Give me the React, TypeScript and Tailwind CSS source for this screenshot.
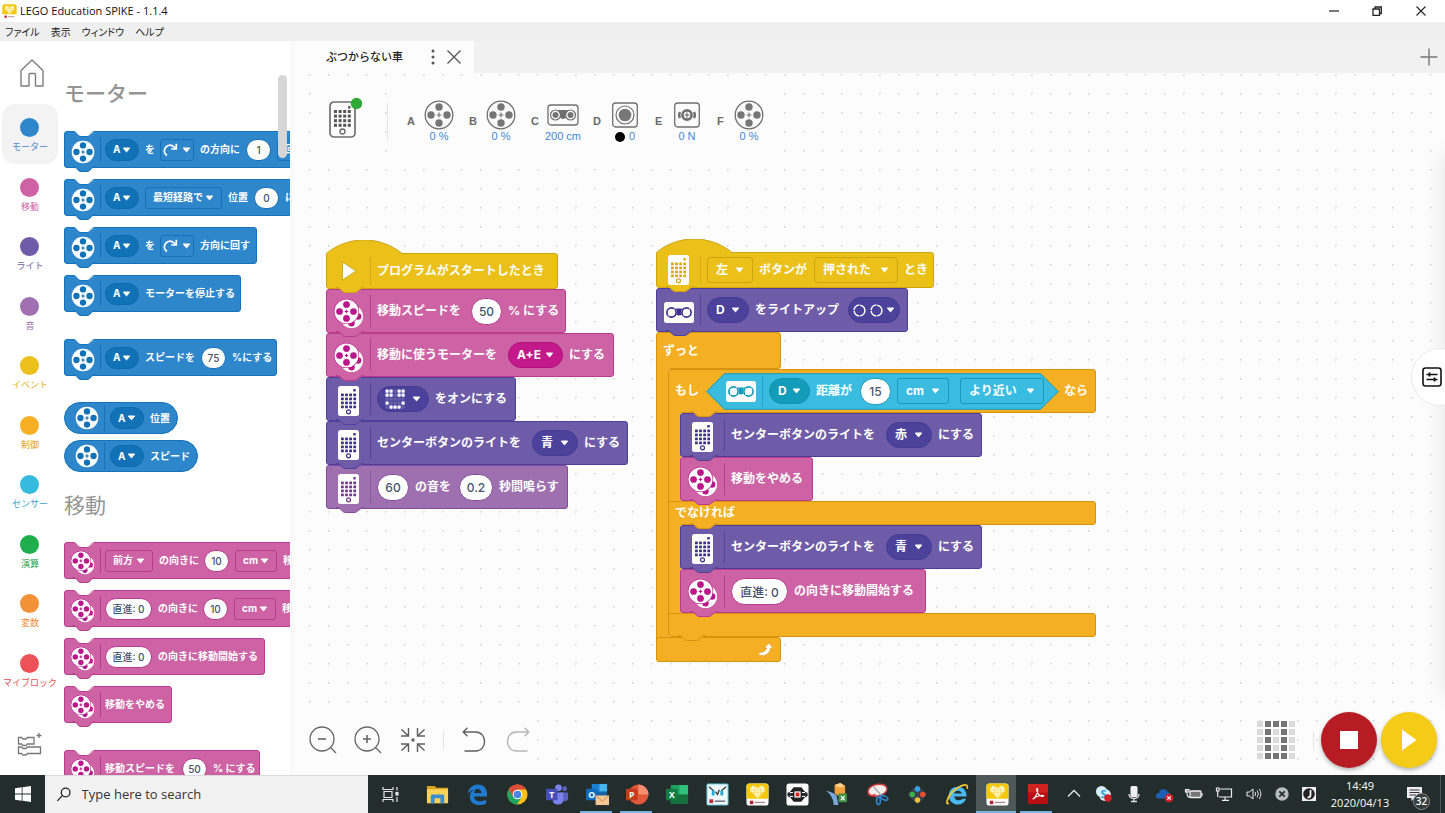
import { createContext, useContext } from "react";
import type { ReactNode } from "react";

type Tone = {
  box: string;
  fill: string;
  line: string;
  stroke: string;
  field: string;
  ink: string;
};

const tones: Record<string, Tone> = {
  motor: { box: "bg-[#2e86cb] border-[#1673bb]", fill: "fill-[#2e86cb]", line: "bg-[#1673bb]", stroke: "stroke-[#1673bb]", field: "bg-[#1272b8] border-[#0d69ae]", ink: "#1272b8" },
  move: { box: "bg-[#cd62a4] border-[#b93a8e]", fill: "fill-[#cd62a4]", line: "bg-[#b93a8e]", stroke: "stroke-[#b93a8e]", field: "bg-[#c3198a] border-[#ad1179]", ink: "#b9178a" },
  light: { box: "bg-[#6f5ca8] border-[#4b3f99]", fill: "fill-[#6f5ca8]", line: "bg-[#564795]", stroke: "stroke-[#4b3f99]", field: "bg-[#4c429b] border-[#433a94]", ink: "#3c2f8c" },
  sound: { box: "bg-[#9e70b0] border-[#844b9c]", fill: "fill-[#9e70b0]", line: "bg-[#8a559f]", stroke: "stroke-[#844b9c]", field: "bg-[#844b9c] border-[#743c8d]", ink: "#75368f" },
  event: { box: "bg-[#ebc119] border-[#cda50f]", fill: "fill-[#ebc119]", line: "bg-[#d3ab10]", stroke: "stroke-[#cda50f]", field: "bg-[#d3ab10] border-[#cda50f]", ink: "#d3ab10" },
  control: { box: "bg-[#f5af22] border-[#d6930f]", fill: "fill-[#f5af22]", line: "bg-[#d6930f]", stroke: "stroke-[#d6930f]", field: "bg-[#d6930f] border-[#d6930f]", ink: "#d6930f" },
  sensor: { box: "bg-[#3abce0] border-[#1899bb]", fill: "fill-[#3abce0]", line: "bg-[#1da3c5]", stroke: "stroke-[#1899bb]", field: "bg-[#129cb9] border-[#0e93af]", ink: "#129cb9" },
};

const BlockContext = createContext<{ tone: Tone; small: boolean }>({ tone: tones.motor, small: false });

/* ---------- icons on blocks ---------- */

function Reel({ cx, cy, r, ink }: { cx: number; cy: number; r: number; ink: string }) {
  const d = r * 0.58;
  const h = r * 0.28;
  return (
    <g>
      <circle cx={cx} cy={cy} r={r} fill="#fff" />
      <circle cx={cx} cy={cy - d} r={h} fill={ink} />
      <circle cx={cx} cy={cy + d} r={h} fill={ink} />
      <circle cx={cx - d} cy={cy} r={h} fill={ink} />
      <circle cx={cx + d} cy={cy} r={h} fill={ink} />
      <path d={`M${cx - 1.8} ${cy}h3.6M${cx} ${cy - 1.8}v3.6`} stroke={ink} strokeWidth="1.2" />
    </g>
  );
}

function MotorIcon() {
  const { tone } = useContext(BlockContext);
  return (
    <svg width="24" height="24" viewBox="0 0 24 24" aria-hidden="true">
      <Reel cx={12} cy={12} r={11.3} ink={tone.ink} />
    </svg>
  );
}

function MoveIcon() {
  const { tone, small } = useContext(BlockContext);
  const size = small ? 25 : 31;
  return (
    <svg width={size} height={size} viewBox="0 0 31 31" aria-hidden="true">
      <Reel cx={18.5} cy={18.5} r={11.5} ink={tone.ink} />
      <circle cx="13.5" cy="13.5" r="12.6" fill={tone.ink} />
      <Reel cx={13.5} cy={13.5} r={12} ink={tone.ink} />
    </svg>
  );
}

function HubIcon() {
  const { tone } = useContext(BlockContext);
  return (
    <svg width="21" height="30" viewBox="0 0 21 30" fill={tone.ink} aria-hidden="true">
      <rect width="21" height="30" rx="2.5" fill="#fff" />
      {[0, 1, 2, 3].map((r) =>
        [0, 1, 2, 3].map((c) => <rect key={`${r}-${c}`} x={3 + c * 4.1} y={7.5 + r * 4} width="2.8" height="2.8" rx=".6" />),
      )}
      <rect x="15.3" y="3" width="2.4" height="2.4" rx=".5" />
      <circle cx="10.5" cy="25.8" r="2" fill="none" stroke={tone.ink} strokeWidth="1.2" />
    </svg>
  );
}

function DistanceIcon() {
  const { tone } = useContext(BlockContext);
  return (
    <svg width="30" height="21" viewBox="0 0 30 21" fill="none" stroke={tone.ink} aria-hidden="true">
      <rect width="30" height="21" rx="2.5" fill="#fff" stroke="none" />
      <path d="M8 6.500H22V10.500C19 10.500 19 13.500 15 13.500S11 10.500 8 10.500Z" fill={tone.ink} stroke="none" />
      <circle cx="7.500" cy="10.500" r="5.600" fill="#fff" stroke="none" />
      <circle cx="22.500" cy="10.500" r="5.600" fill="#fff" stroke="none" />
      <circle cx="7.500" cy="10.500" r="4.600" strokeWidth="1.700" />
      <circle cx="22.500" cy="10.500" r="4.600" strokeWidth="1.700" />
      <path d="M4 14.500L5.500 13M9.500 8L11 6.500M19 14.500L20.500 13M24.500 8L26 6.500" stroke="#fff" strokeWidth="1" />
    </svg>
  );
}

function PlayIcon() {
  return (
    <svg width="16" height="20" viewBox="0 0 16 20" aria-hidden="true">
      <path d="M1.5 1L15 10L1.5 19Z" fill="#fff" stroke="#c39d10" strokeWidth=".8" />
    </svg>
  );
}

function Caret({ className = "" }: { className?: string }) {
  return (
    <svg width="9" height="6" viewBox="0 0 9 6" aria-hidden="true" className={className}>
      <path d="M1.3 1H7.7L4.9 4.6Q4.5 5 4.1 4.6Z" fill="#fff" stroke="#fff" strokeLinejoin="round" />
    </svg>
  );
}

/* ---------- fields ---------- */

function Pick({ value, w, label, square = false }: { value: string; w: string; label: string; square?: boolean }) {
  const { tone, small } = useContext(BlockContext);
  const size = small ? "h-[22px] text-[10px]" : "h-[26px] text-[12px]";
  const pad = small ? "pl-[7px]" : "pl-[8px]";
  return (
    <span className={`relative flex shrink-0 items-center ${w}`}>
      <select
        aria-label={label}
        defaultValue={value}
        className={`w-full appearance-none border font-bold text-white ${size} ${pad} ${square ? `rounded-[3px] ${tone.box}` : `rounded-full ${tone.field}`}`}
      >
        <option>{value}</option>
      </select>
      <Caret className={`pointer-events-none absolute ${small ? "right-[8px]" : "right-[9px]"}`} />
    </span>
  );
}

function Value({ value, w, label }: { value: string; w: string; label: string }) {
  const { tone, small } = useContext(BlockContext);
  return (
    <input
      aria-label={label}
      defaultValue={value}
      className={`shrink-0 rounded-full border text-center font-medium text-[#45536b] ${tone.box} bg-white! ${w} ${small ? "h-[22px] text-[10px]" : "h-[27px] text-[12px]"}`}
    />
  );
}

function Words({ children, w = "" }: { children: ReactNode; w?: string }) {
  return <span className={`shrink-0 ${w}`}>{children}</span>;
}

function TurnField() {
  const { tone } = useContext(BlockContext);
  return (
    <button type="button" aria-label="回転方向" className={`flex h-[22px] w-[34px] shrink-0 items-center justify-center gap-[4px] rounded-[3px] border ${tone.box}`}>
      <svg width="15" height="14" viewBox="0 0 15 14" fill="none" stroke="#fff" strokeWidth="1.700" aria-hidden="true">
        <path d="M4 12.500C.5 10.500 .5 6 3.500 3.500C6.500 1.200 10 2.500 12.300 5M13.300 .8V6H8.200" />
      </svg>
      <Caret />
    </button>
  );
}

const smile = ["22022", "22022", "11111", "21112", "12221"];

function MatrixField() {
  const { tone } = useContext(BlockContext);
  return (
    <button type="button" aria-label="ライトのパターン" className={`flex h-[26px] w-[52px] shrink-0 items-center justify-center gap-[7px] rounded-full border ${tone.field}`}>
      <svg width="20" height="20" viewBox="0 0 20 20" fill="#fff" aria-hidden="true">
        {smile.map((row, y) =>
          row.split("").map((v, x) => <rect key={`${x}-${y}`} x={x * 4 + 0.5} y={y * 4 + 0.5} width="3.2" height="3.2" rx=".6" opacity={v === "2" ? 1 : 0.15} />),
        )}
      </svg>
      <Caret />
    </button>
  );
}

function EyesField() {
  const { tone } = useContext(BlockContext);
  return (
    <button type="button" aria-label="ライトアップ" className={`flex h-[26px] w-[52px] shrink-0 items-center justify-center gap-[3px] rounded-full border ${tone.field}`}>
      <svg width="30" height="13" viewBox="0 0 30 13" fill="none" stroke="#fff" strokeWidth="1.500" strokeDasharray="7.600 .9" aria-hidden="true">
        <circle cx="6.500" cy="6.500" r="5.400" />
        <circle cx="23.500" cy="6.500" r="5.400" />
      </svg>
      <Caret />
    </button>
  );
}

/* ---------- blocks ---------- */

function Tab({ tone, small = false, inset = false }: { tone: Tone; small?: boolean; inset?: boolean }) {
  if (small) {
    return (
      <svg width="22" height="7" viewBox="0 0 22 7" aria-hidden="true" className={`absolute left-[8px] z-10 -bottom-[6px] ${tone.fill}`}>
        <path d="M1 0H21V1L16 5H6Z" />
        <path d="M0 .5C2 .5 3 1.500 4 2.500C5.500 4.500 6 5.500 8 5.500H14C16 5.500 16.500 4.500 18 2.500C19 1.500 20 .5 22 .5" className={tone.stroke} />
      </svg>
    );
  }
  return (
    <svg width="28" height="7" viewBox="0 0 28 7" aria-hidden="true" className={`absolute z-10 -bottom-[6px] ${inset ? "left-[21px]" : "left-[9px]"} ${tone.fill}`}>
      <path d="M1 0H27V1L20 5H8Z" />
      <path d="M0 .5C3 .5 4 1.500 5.500 3C7 5 8 5.500 10 5.500H18C20 5.500 21 5 22.500 3C24 1.500 25 .5 28 .5" className={tone.stroke} />
    </svg>
  );
}

function Notch({ tone }: { tone: Tone }) {
  return (
    <svg width="22" height="7" viewBox="0 0 22 7" aria-hidden="true" className="absolute left-[8px] -top-px fill-white">
      <path d="M1 0H21V1L16 5H6Z" />
      <path d="M0 .5C2 .5 3 1.500 4 2.500C5.500 4.500 6 5.500 8 5.500H14C16 5.500 16.500 4.500 18 2.500C19 1.500 20 .5 22 .5" className={tone.stroke} />
    </svg>
  );
}

function Block({ tone: name, icon, w, children, small = false, hat = false }: { tone: string; icon: ReactNode; w: string; children: ReactNode; small?: boolean; hat?: boolean }) {
  const tone = tones[name];
  const height = small ? "h-[37px] text-[10px]" : hat ? "h-[36px] text-[12px]" : "h-[44px] text-[12px]";
  return (
    <BlockContext.Provider value={{ tone, small }}>
      <div className={`relative flex shrink-0 items-center rounded-[3px] border font-bold whitespace-nowrap text-white ${tone.box} ${height} ${w}`}>
        {hat && (
          <svg width="78" height="16" viewBox="0 0 78 16" aria-hidden="true" className={`absolute -top-[14px] -left-px ${tone.fill}`}>
            <path d="M.5 16V13.500C22 -4.500 54 -4.500 76 13.500L77 16Z" />
            <path d="M.5 16V13.500C22 -4.500 54 -4.500 76 13.500" fill="none" className={tone.stroke} />
          </svg>
        )}
        {small && <Notch tone={tone} />}
        <span className={`flex shrink-0 justify-center ${small ? "w-[35px] pt-[4px]" : hat ? "w-[43px]" : "w-[43px] pt-[4px]"}`}>{icon}</span>
        <span className={`w-px shrink-0 ${small ? "mr-[4px] h-[25px]" : hat ? "mr-[6px] h-[28px]" : "mr-[6px] h-[32px]"} ${tone.line}`} />
        <span className="flex items-center gap-[6px]">{children}</span>
        <Tab tone={tone} small={small} />
      </div>
    </BlockContext.Provider>
  );
}

function Reporter({ children, w }: { children: ReactNode; w: string }) {
  const tone = tones.motor;
  return (
    <BlockContext.Provider value={{ tone, small: true }}>
      <div className={`flex h-[32px] shrink-0 items-center rounded-full border pl-[10px] text-[10px] font-bold whitespace-nowrap text-white ${tone.box} ${w}`}>
        <MotorIcon />
        <span className={`mr-[5px] ml-[5px] h-[26px] w-px ${tone.line}`} />
        <span className="flex items-center gap-[6px]">{children}</span>
      </div>
    </BlockContext.Provider>
  );
}

function Bar({ children, className, inset = false, tab = false }: { children?: ReactNode; className: string; inset?: boolean; tab?: boolean }) {
  const tone = tones.control;
  return (
    <div className={`relative flex items-center rounded-[3px] border text-[12px] font-bold whitespace-nowrap text-white ${tone.box} ${className}`}>
      {children}
      {tab && <Tab tone={tone} inset={inset} />}
    </div>
  );
}

function Mouth({ children }: { children: ReactNode }) {
  return (
    <div className="flex">
      <div className="relative -my-[3px] w-[13px] shrink-0 border-l border-[#d6930f] bg-[#f5af22]" />
      <div className="relative -ml-px flex flex-col items-start">{children}</div>
    </div>
  );
}

function Condition() {
  const tone = tones.sensor;
  return (
    <BlockContext.Provider value={{ tone, small: false }}>
      <div className="relative mx-[5px] flex h-[37px] w-[353px] shrink-0 items-center">
        <svg viewBox="0 0 353 37" preserveAspectRatio="none" className={`absolute inset-0 h-full w-full ${tone.fill} ${tone.stroke}`} aria-hidden="true">
          <path d="M.7 18.500L18.500 .7H334.500L352.300 18.500L334.500 36.300H18.500Z" />
        </svg>
        <div className="relative flex items-center gap-[6px] pl-[20px]">
          <DistanceIcon />
          <span className={`h-[31px] w-px ${tone.line}`} />
          <Pick value="D" w="w-[41px]" label="ポート" />
          <Words w="w-[38px]">距離が</Words>
          <Value value="15" w="w-[31px]" label="距離" />
          <Pick value="cm" w="w-[52px]" label="単位" square />
          <span className="w-[84px] pl-[5px]">
            <Pick value="より近い" w="w-[84px]" label="比較" square />
          </span>
        </div>
      </div>
    </BlockContext.Provider>
  );
}

function LeftStack() {
  return (
    <div className="absolute top-[180px] left-[34px] flex flex-col items-start">
      <Block tone="event" icon={<PlayIcon />} w="w-[232px]" hat>
        <Words>プログラムがスタートしたとき</Words>
      </Block>
      <Block tone="move" icon={<MoveIcon />} w="w-[240px]">
        <Words w="w-[88px]">移動スピードを</Words>
        <Value value="50" w="w-[31px]" label="スピード" />
        <Words>% にする</Words>
      </Block>
      <Block tone="move" icon={<MoveIcon />} w="w-[288px]">
        <Words w="w-[125px]">移動に使うモーターを</Words>
        <Pick value="A+E" w="w-[55px]" label="モーター" />
        <Words>にする</Words>
      </Block>
      <Block tone="light" icon={<HubIcon />} w="w-[190px]">
        <MatrixField />
        <Words>をオンにする</Words>
      </Block>
      <Block tone="light" icon={<HubIcon />} w="w-[302px]">
        <Words w="w-[149px]">センターボタンのライトを</Words>
        <Pick value="青" w="w-[46px]" label="色" />
        <Words>にする</Words>
      </Block>
      <Block tone="sound" icon={<HubIcon />} w="w-[242px]">
        <Value value="60" w="w-[32px]" label="音程" />
        <Words w="w-[38px]">の音を</Words>
        <Value value="0.2" w="w-[34px]" label="秒数" />
        <Words>秒間鳴らす</Words>
      </Block>
    </div>
  );
}

function RightStack() {
  return (
    <div className="absolute top-[179px] left-[364px] flex flex-col items-start">
      <Block tone="event" icon={<HubIcon />} w="w-[278px]" hat>
        <Pick value="左" w="w-[46px]" label="ボタン" square />
        <Words w="w-[49px]">ボタンが</Words>
        <Pick value="押された" w="w-[84px]" label="状態" square />
        <Words>とき</Words>
      </Block>
      <Block tone="light" icon={<DistanceIcon />} w="w-[252px]">
        <Pick value="D" w="w-[42px]" label="ポート" />
        <Words w="w-[87px]">をライトアップ</Words>
        <EyesField />
      </Block>
      <Bar className="h-[37px] w-[125px] pl-[6px]">
        <Words>ずっと</Words>
      </Bar>
      <Mouth>
        <Bar className="h-[44px] w-[428px] pl-[6px]" tab inset>
          <Words w="w-[26px]">もし</Words>
          <Condition />
          <Words>なら</Words>
        </Bar>
        <Mouth>
          <Block tone="light" icon={<HubIcon />} w="w-[302px]">
            <Words w="w-[149px]">センターボタンのライトを</Words>
            <Pick value="赤" w="w-[46px]" label="色" />
            <Words>にする</Words>
          </Block>
          <Block tone="move" icon={<MoveIcon />} w="w-[133px]">
            <Words>移動をやめる</Words>
          </Block>
        </Mouth>
        <Bar className="h-[24px] w-[428px] pl-[6px]" tab inset>
          <span className="relative z-20">でなければ</span>
        </Bar>
        <Mouth>
          <Block tone="light" icon={<HubIcon />} w="w-[302px]">
            <Words w="w-[149px]">センターボタンのライトを</Words>
            <Pick value="青" w="w-[46px]" label="色" />
            <Words>にする</Words>
          </Block>
          <Block tone="move" icon={<MoveIcon />} w="w-[246px]">
            <Value value="直進: 0" w="w-[57px]" label="向き" />
            <Words>の向きに移動開始する</Words>
          </Block>
        </Mouth>
        <Bar className="h-[24px] w-[428px]" tab />
      </Mouth>
      <Bar className="h-[25px] w-[125px] justify-end pr-[7px]">
        <svg width="14" height="13" viewBox="0 0 14 13" aria-hidden="true">
          <path d="M0 9.500C4 9.700 7 8 7.800 4.800H5.300L10.300 .3L13.800 5.200H11.200C11 10.500 6 13.800 0 12Z" fill="#fff" stroke="#c98a12" strokeWidth=".4" />
        </svg>
      </Bar>
    </div>
  );
}

/* ---------- side navigation and palette ---------- */

const categories = [
  { name: "モーター", dot: "bg-[#2e86cb]", text: "text-[#4c86cc]" },
  { name: "移動", dot: "bg-[#cf61a5]", text: "text-[#cf61a5]" },
  { name: "ライト", dot: "bg-[#6f5ba7]", text: "text-[#6f5ba7]" },
  { name: "音", dot: "bg-[#a070b1]", text: "text-[#a070b1]" },
  { name: "イベント", dot: "bg-[#ecc01a]", text: "text-[#e3b11c]" },
  { name: "制御", dot: "bg-[#f6ae22]", text: "text-[#e39a1c]" },
  { name: "センサー", dot: "bg-[#36bbdf]", text: "text-[#2ea6c9]" },
  { name: "演算", dot: "bg-[#1eae4c]", text: "text-[#1e9e47]" },
  { name: "変数", dot: "bg-[#f39138]", text: "text-[#ee8a30]" },
  { name: "マイブロック", dot: "bg-[#ec5258]", text: "text-[#e54e55]" },
];

function Sidebar() {
  return (
    <nav className="flex w-[60px] shrink-0 flex-col">
      <div className="flex h-[63px] shrink-0 items-center justify-center pl-[3px]">
        <button type="button" aria-label="ホーム">
          <svg width="24" height="28" viewBox="0 0 24 28" fill="none" stroke="#7d7d7d" strokeWidth="1.400" strokeLinejoin="round" aria-hidden="true">
            <path d="M1 11.500L12 1L23 11.500V27H15.500V15.500Q15.500 14.500 14.500 14.500H10Q9 14.500 9 15.500V27H1Z" />
          </svg>
        </button>
      </div>
      <ul className="flex flex-1 flex-col px-[2px]">
        {categories.map((c, i) => (
          <li key={c.name} className="flex flex-1">
            <button type="button" className={`flex w-full flex-col items-center rounded-[13px] pt-[14px] ${i === 0 ? "bg-[#f3f3f3]" : ""}`}>
              <span className={`-ml-[2px] size-[19px] rounded-full ${c.dot}`} />
              <span className={`mt-[3px] text-[9px] leading-[14px] whitespace-nowrap ${c.text}`}>{c.name}</span>
            </button>
          </li>
        ))}
      </ul>
      <div className="flex h-[76px] shrink-0 items-center justify-center pt-[14px]">
        <button type="button" aria-label="拡張機能">
          <svg width="26" height="24" viewBox="0 0 26 24" fill="none" stroke="#777" strokeWidth="1.300" aria-hidden="true">
            <path d="M1.500 5.500H4.500L6 7H9L10.500 5.500H17V12H10.500L9 13.500H6L4.500 12H1.500Z" />
            <path d="M1.500 15H4.500L6 16.500H9L10.500 15H23.500V21.500H10.500L9 23H6L4.500 21.500H1.500Z" />
            <path d="M19.500 3.500H24.500M22 1V6" />
          </svg>
        </button>
      </div>
    </nav>
  );
}

function PortA() {
  return <Pick value="A" w="w-[34px]" label="ポート" />;
}

function Palette() {
  return (
    <aside className="relative h-full w-[230px] shrink-0 overflow-hidden pl-[4px]">
      <div className="flex h-full flex-col items-start overflow-hidden pt-[42px]">
        <h2 className="mb-[26px] h-[22px] shrink-0 text-[21px] leading-[22px] font-medium text-[#949494]">モーター</h2>
        <div className="flex flex-col items-start gap-[11px]">
          <Block tone="motor" icon={<MotorIcon />} w="w-[270px]" small>
            <PortA />
            <Words w="w-[9px]">を</Words>
            <TurnField />
            <Words w="w-[40px]">の方向に</Words>
            <Value value="1" w="w-[25px]" label="量" />
            <Pick value="回転" w="w-[48px]" label="単位" square />
          </Block>
          <Block tone="motor" icon={<MotorIcon />} w="w-[270px]" small>
            <PortA />
            <Pick value="最短経路で" w="w-[77px]" label="経路" square />
            <Words w="w-[20px]">位置</Words>
            <Value value="0" w="w-[25px]" label="位置" />
            <Words>にする</Words>
          </Block>
          <Block tone="motor" icon={<MotorIcon />} w="w-[193px]" small>
            <PortA />
            <Words w="w-[9px]">を</Words>
            <TurnField />
            <Words>方向に回す</Words>
          </Block>
          <Block tone="motor" icon={<MotorIcon />} w="w-[177px]" small>
            <PortA />
            <Words>モーターを停止する</Words>
          </Block>
        </div>
        <div className="mt-[27px]">
          <Block tone="motor" icon={<MotorIcon />} w="w-[213px]" small>
            <PortA />
            <Words>スピードを</Words>
            <Value value="75" w="w-[25px]" label="スピード" />
            <Words>%にする</Words>
          </Block>
        </div>
        <div className="mt-[26px] flex flex-col gap-[6px]">
          <Reporter w="w-[114px]">
            <PortA />
            <Words>位置</Words>
          </Reporter>
          <Reporter w="w-[134px]">
            <PortA />
            <Words>スピード</Words>
          </Reporter>
        </div>
        <h2 className="mt-[23px] mb-[25px] h-[22px] shrink-0 text-[21px] leading-[22px] text-[#949494]">移動</h2>
        <div className="flex flex-col items-start gap-[11px]">
          <Block tone="move" icon={<MoveIcon />} w="w-[270px]" small>
            <Pick value="前方" w="w-[48px]" label="向き" square />
            <Words w="w-[39px]">の向きに</Words>
            <Value value="10" w="w-[25px]" label="量" />
            <Pick value="cm" w="w-[42px]" label="単位" square />
            <Words>移動する</Words>
          </Block>
          <Block tone="move" icon={<MoveIcon />} w="w-[270px]" small>
            <Value value="直進: 0" w="w-[47px]" label="向き" />
            <Words w="w-[39px]">の向きに</Words>
            <Value value="10" w="w-[25px]" label="量" />
            <Pick value="cm" w="w-[42px]" label="単位" square />
            <Words>移動する</Words>
          </Block>
          <Block tone="move" icon={<MoveIcon />} w="w-[201px]" small>
            <Value value="直進: 0" w="w-[47px]" label="向き" />
            <Words>の向きに移動開始する</Words>
          </Block>
          <Block tone="move" icon={<MoveIcon />} w="w-[108px]" small>
            <Words>移動をやめる</Words>
          </Block>
        </div>
        <div className="mt-[27px]">
          <Block tone="move" icon={<MoveIcon />} w="w-[196px]" small>
            <Words w="w-[71px]">移動スピードを</Words>
            <Value value="50" w="w-[25px]" label="スピード" />
            <Words>% にする</Words>
          </Block>
        </div>
      </div>
      <span className="absolute top-[34px] right-[3px] h-[83px] w-[9px] rounded-full bg-[#d6d6d6]" />
    </aside>
  );
}

/* ---------- hub and ports ---------- */

function PortMotor() {
  return (
    <svg width="30" height="30" viewBox="0 0 30 30" fill="#757575" aria-hidden="true">
      <circle cx="15" cy="15" r="13.800" fill="none" stroke="#6f6f6f" strokeWidth="1.300" />
      <circle cx="15" cy="7" r="3.700" />
      <circle cx="15" cy="23" r="3.700" />
      <circle cx="7" cy="15" r="3.700" />
      <circle cx="23" cy="15" r="3.700" />
      <path d="M12.500 15H17.500M15 12.500V17.500" stroke="#757575" strokeWidth="1.200" />
    </svg>
  );
}

function PortDistance() {
  return (
    <svg width="32" height="30" viewBox="0 0 32 30" fill="none" stroke="#6f6f6f" aria-hidden="true">
      <rect x="1" y="5" width="30" height="20" rx="3" strokeWidth="1.300" />
      <path d="M9 10H23V17H19.500Q18 19 16 19T12.500 17H9Z" fill="#6f6f6f" stroke="none" />
      <circle cx="8.500" cy="15" r="5" fill="#fcfcfc" strokeWidth="1.200" />
      <circle cx="23.500" cy="15" r="5" fill="#fcfcfc" strokeWidth="1.200" />
      <circle cx="8.500" cy="15" r="3" fill="#757575" stroke="none" />
      <circle cx="23.500" cy="15" r="3" fill="#757575" stroke="none" />
    </svg>
  );
}

function PortColor() {
  return (
    <svg width="28" height="30" viewBox="0 0 28 30" fill="none" stroke="#6f6f6f" aria-hidden="true">
      <rect x="1.700" y="3" width="24.600" height="24" rx="3" strokeWidth="1.300" />
      <circle cx="14" cy="15" r="9" strokeWidth="1.200" />
      <circle cx="14" cy="15" r="6.300" fill="#777" stroke="none" />
    </svg>
  );
}

function PortForce() {
  return (
    <svg width="28" height="30" viewBox="0 0 28 30" fill="none" stroke="#6f6f6f" aria-hidden="true">
      <rect x="1.700" y="3" width="24.600" height="24" rx="3" strokeWidth="1.300" />
      <circle cx="14" cy="15" r="4.600" strokeWidth="2.600" />
      <path d="M14 12.500V17.500M11.500 15H16.500" strokeWidth="1.200" />
      <path d="M7 12Q5.300 15 7 18M21 12Q22.700 15 21 18" strokeWidth="2.400" />
    </svg>
  );
}

const ports = [
  { id: "A", icon: <PortMotor />, value: "0 %" },
  { id: "B", icon: <PortMotor />, value: "0 %" },
  { id: "C", icon: <PortDistance />, value: "200 cm" },
  { id: "D", icon: <PortColor />, value: "0", dot: true },
  { id: "E", icon: <PortForce />, value: "0 N" },
  { id: "F", icon: <PortMotor />, value: "0 %" },
];

function PortRow() {
  return (
    <div className="flex items-start pt-[9px] pl-[30px]">
      <div className="flex h-[78px] w-[46px] items-start justify-center bg-[#fcfcfc] pt-[13px]">
        <svg width="36" height="44" viewBox="0 0 36 44" fill="none" aria-hidden="true">
          <rect x="3" y="7" width="25" height="35" rx="4" stroke="#6f6f6f" strokeWidth="1.700" />
          {[0, 1, 2, 3].map((r) =>
            [0, 1, 2, 3].map((c) => <rect key={`${r}-${c}`} x={7 + c * 4.6} y={15 + r * 4.6} width="3" height="3" fill="#555" />),
          )}
          <rect x="21" y="11" width="2.600" height="2.600" fill="#666" />
          <circle cx="15.500" cy="36.500" r="2.500" stroke="#666" strokeWidth="1.300" />
          <circle cx="29.500" cy="8.500" r="5.700" fill="#2ea836" />
        </svg>
      </div>
      <span className="mt-[21px] ml-[19px] h-[37px] w-px bg-[#e4e4e4]" />
      <div className="flex h-[78px] items-start bg-[#fcfcfc] pl-[17px] font-['Liberation_Sans',sans-serif]">
        {ports.map((p) => (
          <div key={p.id} className="flex w-[62px] items-start pt-[18px]">
            <span className="w-[12px] pt-[14px] pl-[2px] text-[11px] leading-[14px] font-bold text-[#6b6b6b]">{p.id}</span>
            <span className="flex w-[44px] flex-col items-center">
              {p.icon}
              <span className="flex items-center gap-[4px] text-[11px] leading-[13px] whitespace-nowrap text-[#4488d8]">
                {p.dot && <span className="size-[10px] rounded-full bg-black" />}
                {p.value}
              </span>
            </span>
          </div>
        ))}
      </div>
    </div>
  );
}

/* ---------- canvas toolbar ---------- */

function ZoomIcon({ plus = false }: { plus?: boolean }) {
  return (
    <svg width="28" height="28" viewBox="0 0 28 28" fill="none" stroke="#666" strokeWidth="1.300" aria-hidden="true">
      <circle cx="13" cy="13" r="12" />
      <path d="M21.500 21.500L27 27" />
      <path d={plus ? "M9 13H17M13 9V17" : "M9 13H17"} strokeWidth="1.600" />
    </svg>
  );
}

function FitIcon() {
  return (
    <svg width="26" height="26" viewBox="0 0 26 26" fill="none" stroke="#5f5f5f" strokeWidth="1.400" aria-hidden="true">
      <path d="M1.500 2.500L8 8.500M8.500 1V9H1M24.500 2.500L18 8.500M17.500 1V9H25M1.500 23.500L8 17.500M8.500 25V17H1M24.500 23.500L18 17.500M17.500 25V17H25" />
      <circle cx="13" cy="13" r="1.700" fill="#5f5f5f" stroke="none" />
    </svg>
  );
}

function UndoIcon({ flip = false }: { flip?: boolean }) {
  return (
    <svg width="24" height="26" viewBox="0 0 24 26" fill="none" stroke={flip ? "#b5b5b5" : "#606060"} strokeWidth="1.400" aria-hidden="true" className={flip ? "-scale-x-100" : ""}>
      <path d="M1.500 5H13.500C19.500 5 22.500 9.500 22.500 14.500S19.500 24 13.500 24H2.500M5.500 .7L1.200 5L5.500 9.300" />
    </svg>
  );
}

const zero = ["01110", "01010", "01010", "01010", "01110"];

function BottomBar() {
  return (
    <div className="flex items-center justify-between pr-[8px] pb-[7px] pl-[17px]">
      <div className="flex h-[50px] items-center bg-[#fcfcfc]">
        <button type="button" aria-label="縮小"><ZoomIcon /></button>
        <button type="button" aria-label="拡大" className="ml-[17px]"><ZoomIcon plus /></button>
        <button type="button" aria-label="全体表示" className="ml-[18px]"><FitIcon /></button>
        <span className="mr-[18px] ml-[17px] h-[19px] w-px bg-[#e0e0e0]" />
        <button type="button" aria-label="元に戻す"><UndoIcon /></button>
        <button type="button" aria-label="やり直し" className="ml-[20px]"><UndoIcon flip /></button>
      </div>
      <div className="flex items-center">
        <svg width="38" height="38" viewBox="0 0 38 38" aria-hidden="true" className="bg-[#fcfcfc]">
          {zero.map((row, y) =>
            row.split("").map((v, x) => <rect key={`${x}-${y}`} x={x * 8} y={y * 8} width="6" height="6" fill={v === "1" ? "#757575" : "#dadada"} />),
          )}
        </svg>
        <span className="mr-[7px] ml-[18px] h-[19px] w-px bg-[#e6e6e6]" />
        <button type="button" aria-label="停止" className="flex size-[56px] items-center justify-center rounded-full bg-[#b71c24] shadow-[0_2px_4px_rgba(0,0,0,0.3)]">
          <span className="size-[18px] bg-white" />
        </button>
        <button type="button" aria-label="開始" className="ml-[4px] flex size-[56px] items-center justify-center rounded-full bg-[#f4cc17] shadow-[0_2px_4px_rgba(0,0,0,0.3)]">
          <svg width="16" height="22" viewBox="0 0 16 22" aria-hidden="true"><path d="M1 .5L15.500 11L1 21.500Z" fill="#fff" /></svg>
        </button>
      </div>
    </div>
  );
}

function Workspace() {
  return (
    <main className="ml-px flex min-w-0 flex-1 flex-col border-l border-[#f3f3f3]">
      <div className="flex h-[32px] shrink-0 items-stretch justify-between bg-[#f1f1f1]">
        <div className="flex w-[182px] items-center bg-[#fcfcfc] pl-[34px]">
          <span className="w-[101px] text-[11px] font-medium whitespace-nowrap text-[#222]">ぶつからない車</span>
          <button type="button" aria-label="メニュー" className="flex w-[11px] justify-center">
            <svg width="4" height="16" viewBox="0 0 4 16" fill="#555" aria-hidden="true"><circle cx="2" cy="2" r="1.500" /><circle cx="2" cy="8" r="1.500" /><circle cx="2" cy="14" r="1.500" /></svg>
          </button>
          <button type="button" aria-label="閉じる" className="ml-[8px]">
            <svg width="16" height="16" viewBox="0 0 16 16" stroke="#555" strokeWidth="1.300" aria-hidden="true"><path d="M1.500 1.500L14.500 14.500M14.500 1.500L1.500 14.500" /></svg>
          </button>
        </div>
        <button type="button" aria-label="新しいプロジェクト" className="mr-[7px]">
          <svg width="18" height="18" viewBox="0 0 18 18" stroke="#777" strokeWidth="1.400" aria-hidden="true"><path d="M.5 9H17.500M9 .5V17.500" /></svg>
        </button>
      </div>
      <div className="relative flex flex-1 flex-col justify-between overflow-hidden bg-[#fcfcfc] bg-[radial-gradient(circle_at_center,#dcdcdc_1px,transparent_1px)] bg-[size:19px_19px] bg-[position:8px_-8px]">
        <PortRow />
        <BottomBar />
        <LeftStack />
        <RightStack />
        <span className="pointer-events-none absolute top-[80px] -right-[40px] bottom-[80px] w-[40px] shadow-[0_0_22px_rgba(0,0,0,0.1)]" />
        <button type="button" aria-label="モニター" className="absolute top-[275px] -right-[24px] flex size-[58px] items-center rounded-full border border-[#e9e9e9] bg-white pl-[10px]">
          <svg width="20" height="20" viewBox="0 0 20 20" fill="none" stroke="#111" strokeWidth="1.600" aria-hidden="true">
            <rect x="1" y="1" width="18" height="18" rx="2.500" />
            <path d="M4.500 7.500H15.500M4.500 12.500H15.500" />
            <path d="M7.500 5.500V9.500M12.500 10.500V14.500" strokeWidth="1.800" />
          </svg>
        </button>
      </div>
    </main>
  );
}

/* ---------- window frame ---------- */

function SpikeIcon({ size }: { size: number }) {
  return (
    <svg width={size} height={size} viewBox="0 0 24 24" aria-hidden="true">
      <rect x=".5" y=".5" width="23" height="23" rx="3" fill="#fff" />
      <path d="M3.500 .5H20.500A3 3 0 0 1 23.500 3.500V16.500H.5V3.500A3 3 0 0 1 3.500 .5Z" fill="#f4c80c" />
      <g fill="#fff8d0">
        <path d="M6 3H10V5H14V3H18V5H19.500V9H17.500V11H15.500V13H13.500V15H10.500V13H8.500V11H6.500V9H4.500V5H6Z" />
      </g>
      <path d="M4.500 7.500H19.500M4.500 10H19.500M9 3V15M12 3V15M15 3V15" stroke="#f4d34a" strokeWidth=".6" />
      <rect x="4" y="18.500" width="3.600" height="3.600" fill="#b3202c" />
      <path d="M9 20.300H20" stroke="#a88" strokeWidth="1.400" />
    </svg>
  );
}

function TitleBar() {
  return (
    <header className="shrink-0 font-['Open_Sans','Noto_Sans_CJK_JP',sans-serif]">
      <div className="flex h-[22px] items-center bg-white pl-[2px]">
        <SpikeIcon size={15} />
        <h1 className="ml-[3px] flex-1 text-[11px] text-[#111]">LEGO Education SPIKE - 1.1.4</h1>
        <div className="flex items-center gap-[33px] pr-[18px] text-[#222]">
          <button type="button" aria-label="最小化"><svg width="10" height="10" viewBox="0 0 10 10" stroke="#222" strokeWidth="1.200" aria-hidden="true"><path d="M0 5H10" /></svg></button>
          <button type="button" aria-label="元のサイズに戻す"><svg width="10" height="10" viewBox="0 0 10 10" fill="none" stroke="#222" strokeWidth="1.300" aria-hidden="true"><path d="M1 3H7.500V9.300H1ZM3 3V1H9.300V7.500H7.500" /></svg></button>
          <button type="button" aria-label="ウィンドウを閉じる"><svg width="12" height="12" viewBox="0 0 12 12" stroke="#222" strokeWidth="1.100" aria-hidden="true"><path d="M1.500 1.500L10.500 10.500M10.500 1.500L1.500 10.500" /></svg></button>
        </div>
      </div>
      <nav className="flex h-[19px] items-center gap-[11px] bg-[#efefef] pl-[5px] text-[10px] leading-[18px] text-[#222] [font-feature-settings:'palt']">
        <button type="button">ファイル</button>
        <button type="button">表示</button>
        <button type="button">ウィンドウ</button>
        <button type="button">ヘルプ</button>
      </nav>
    </header>
  );
}

/* ---------- taskbar ---------- */

function Letter({ bg, children }: { bg: string; children: string }) {
  return (
    <g>
      <rect x="0" y="6" width="12" height="12" rx="1" fill={bg} />
      <text x="6" y="15.300" textAnchor="middle" fontSize="9" fontWeight="700" fill="#fff" fontFamily="Open Sans, sans-serif">{children}</text>
    </g>
  );
}

const apps: { name: string; art: ReactNode; state?: string }[] = [
  { name: "エクスプローラー", art: <><path d="M1 3H9L11 5H23V21H1Z" fill="#d9a321" /><path d="M1 6.500H23V21H1Z" fill="#fbd35a" /><path d="M5 21V13.500Q5 12 6.500 12H17.500Q19 12 19 13.500V21H15V16H9V21Z" fill="#3b8fd1" /></> },
  { name: "Edge", art: <path d="M2 11C3 4.500 7.500 1.500 12.500 1.500C19 1.500 22 6.500 22 11.500V14H8.500C8.800 17.500 11.500 19 15 19C17.500 19 19.500 18.300 21 17.300V21.300C19 22.500 16.500 23 14 23C8 23 4 19.500 4 14.500C4 11 5.500 8.500 8.500 7C6 7.500 3.500 9 2 11ZM8.500 10.500H16C16 8 14.500 6.300 12.300 6.300S8.800 8 8.500 10.500Z" fill="#2079cc" /> },
  { name: "Chrome", art: <><circle cx="12" cy="12" r="10.500" fill="#fbc116" /><path d="M12 12L2.900 6.750A10.500 10.500 0 0 0 11.500 22.500L16.500 14.500Z" fill="#1fa463" /><path d="M12 6.750H21.100A10.500 10.500 0 0 0 2.900 6.750L7.500 14Z" fill="#dd4b3e" /><circle cx="12" cy="12" r="5" fill="#fff" /><circle cx="12" cy="12" r="4" fill="#4a86e8" /></> },
  { name: "Teams", art: <><circle cx="19.500" cy="6" r="2.500" fill="#5a62c3" /><circle cx="13" cy="5" r="3.500" fill="#7b83eb" /><path d="M15 10H23V16Q23 19 19.500 19H15Z" fill="#5a62c3" /><path d="M7 10H18V17Q18 22.500 12.500 22.500T7 17Z" fill="#7b83eb" /><Letter bg="#464eb8">T</Letter></> },
  { name: "Outlook", state: "open", art: <><rect x="6" y="1" width="16" height="16" fill="#1d7fd0" /><rect x="14" y="1" width="8" height="8" fill="#45b5ec" /><rect x="6" y="9" width="16" height="8" fill="#1763a8" /><Letter bg="#0f6cbd">O</Letter><rect x="10" y="13" width="14" height="10" fill="#f6c690" /><path d="M10 13L17 19L24 13" fill="none" stroke="#c98c4f" /></> },
  { name: "PowerPoint", state: "open", art: <><circle cx="13" cy="12" r="10.500" fill="#e2583a" /><path d="M13 1.500A10.500 10.500 0 0 1 23.500 12H13Z" fill="#f58f70" /><Letter bg="#c33b1c">P</Letter></> },
  { name: "Excel", art: <><rect x="5" y="2" width="18" height="20" rx="1" fill="#21a064" /><path d="M14 2H22A1 1 0 0 1 23 3V12H14Z" fill="#33c07d" /><path d="M5 12H23V21A1 1 0 0 1 22 22H6A1 1 0 0 1 5 21Z" fill="#14703f" /><Letter bg="#107c41">X</Letter></> },
  { name: "WeDo", art: <><rect x="1" y="1" width="22" height="22" rx="1" fill="#eefafd" stroke="#5cc3de" /><path d="M3 4L8 8M21 4L16 8M10 9L12 12L14 7" stroke="#333" strokeWidth="1.300" fill="none" /><rect x="6" y="8" width="3" height="5" fill="#24a9d0" /><rect x="15" y="8" width="3" height="5" fill="#24a9d0" /><rect x="3.500" y="17" width="4" height="4" fill="#c02a35" /><path d="M9 19H20" stroke="#667" strokeWidth="1.500" /></> },
  { name: "SPIKE", art: <SpikeIcon size={24} /> },
  { name: "EV3", art: <><rect x=".5" y=".5" width="23" height="23" rx="3" fill="#fff" /><path d="M8 4.500H16L20 9.500H4ZM4 14.500H20L16 19.500H8Z" fill="#222" /><path d="M1.500 10.500L4 9V15L1.500 13.500ZM22.500 10.500L20 9V15L22.500 13.500Z" fill="#222" /><rect x="4" y="10.500" width="16" height="3" fill="#222" /><rect x="8" y="8" width="8" height="8" fill="#fff" stroke="#222" strokeWidth="1.500" /><rect x="10" y="10" width="4" height="4" fill="#d9261c" /></> },
  { name: "データ", art: <><path d="M9 2L15 0L20 3V11L14 14L9 11Z" fill="#f0a03c" /><path d="M9 2L14 5L20 3L15 0Z" fill="#ffd28a" /><path d="M0 8Q9 10 11 13L13 23H8Q8 14 0 8Z" fill="#7aa6dc" /><rect x="13" y="11" width="9" height="9" fill="#3f9142" /><path d="M15.500 13.500L19.500 18M19.500 13.500L15.500 18" stroke="#fff" strokeWidth="1.200" /></> },
  { name: "切り取り", art: <><ellipse cx="12" cy="7.500" rx="10" ry="6" fill="#f5eeee" stroke="#d03b3b" strokeWidth="1.500" transform="rotate(-12 12 7.500)" /><path d="M8 4L16 13" stroke="#aaa" strokeWidth="1.500" /><ellipse cx="13" cy="18.500" rx="2" ry="4" fill="none" stroke="#2d86cc" strokeWidth="1.700" /><ellipse cx="19" cy="15.500" rx="4" ry="2" fill="none" stroke="#2d86cc" strokeWidth="1.700" transform="rotate(25 19 15.500)" /><path d="M2 11Q4 15 10 12" fill="none" stroke="#d03b3b" strokeWidth="1.500" /></> },
  { name: "ペイント", art: <><rect x="4.500" y="4.500" width="15" height="15" rx="2" fill="#3c4250" transform="rotate(45 12 12)" /><circle cx="12" cy="6.300" r="2.800" fill="#30a4e8" /><circle cx="6.500" cy="12" r="2.800" fill="#37b34a" /><circle cx="17.500" cy="12" r="2.800" fill="#ec4d2e" /><circle cx="12" cy="17.700" r="2.800" fill="#f4c430" /></> },
  { name: "Internet Explorer", art: <><path d="M3 13C3 7.500 7 4 12.500 4S21.500 8 21.500 14H8.500C9 17 11 18 13.500 18C15.500 18 16.500 17.300 17.300 16.500H21C19.500 20.500 16.500 22.500 12.500 22.500C7 22.500 3 18.500 3 13ZM8.500 11H16.500C16 9 14.500 8 12.500 8S9 9 8.500 11Z" fill="#4bb8ee" /><path d="M3 21C-1 24 1 14 8 8C15 2 24 -1 22 6" fill="none" stroke="#f7c52b" strokeWidth="1.800" /></> },
  { name: "SPIKE 実行中", state: "active", art: <SpikeIcon size={24} /> },
  { name: "Acrobat", state: "open", art: <><rect x="2" y="1" width="21" height="21" fill="#b80f12" /><rect x="2" y="1" width="21" height="9" fill="#d3211f" /><path d="M7 17C11 14 13 9 12 6C11 4.500 10.500 8 13 11.500C15 14 18 14.500 18.500 13.500C18 12 11 13.500 7 17Z" fill="none" stroke="#fff" strokeWidth="1.200" /></> },
];

const tray: { name: string; art: ReactNode }[] = [
  { name: "隠れているアイコン", art: <path d="M4 12.500L10 6.500L16 12.500" stroke="#e8e8e8" strokeWidth="1.300" fill="none" /> },
  { name: "Skype", art: <><circle cx="7.500" cy="7.500" r="5.500" fill="#d8f0fb" /><circle cx="11" cy="11" r="6" fill="#d8f0fb" /><text x="9.500" y="13.500" textAnchor="middle" fontSize="11" fontWeight="700" fill="#1ba1de" fontFamily="Open Sans, sans-serif">S</text><circle cx="14" cy="14" r="3.700" fill="#d32027" /></> },
  { name: "マイク", art: <><rect x="6.500" y="2" width="7" height="11" rx="1.500" fill="#eee" /><path d="M5 10Q5 14.500 10 14.500T15 10M10 14.500V17M7 17.500H13" stroke="#ddd" strokeWidth="1.300" fill="none" /></> },
  { name: "OneDrive", art: <><path d="M4 14.500Q1 14 2 11Q3 9 5 9Q6 4.500 10 5.500Q12 4.500 14 8Q17 9 16.500 14.500Z" fill="#1d5fb4" /><circle cx="15" cy="14" r="4.300" fill="#d32027" /><path d="M13.300 12.300L16.700 15.700M16.700 12.300L13.300 15.700" stroke="#fff" strokeWidth="1.200" /></> },
  { name: "バッテリー", art: <><rect x="6" y="7" width="11" height="6.500" rx="1" stroke="#eee" strokeWidth="1.300" fill="#777" /><path d="M18 9V12M3 6V8.500Q3 13.500 6 13.500M1.500 5.500H5V8H1.500Z" stroke="#eee" strokeWidth="1.200" fill="none" /></> },
  { name: "ネットワーク", art: <path d="M6 5H17.500V13H5M11 13V16M8 16.300H15M2.500 4H5V7H2.500ZM3.700 7V13" stroke="#eee" strokeWidth="1.200" fill="none" /> },
  { name: "音量", art: <><path d="M3 8H5.500L9 5V15L5.500 12H3Z" stroke="#eee" fill="none" /><path d="M11 8Q12.300 10 11 12M13.200 6.500Q15.500 10 13.200 13.500M15.300 5Q18.500 10 15.300 15" stroke="#ddd" fill="none" /></> },
];

function Taskbar() {
  return (
    <footer className="flex h-[38px] shrink-0 bg-[#222d2c] font-['Open_Sans','Noto_Sans_CJK_JP',sans-serif] text-white">
      <button type="button" aria-label="スタート" className="flex w-[45px] shrink-0 items-center justify-center">
        <svg width="16" height="16" viewBox="0 0 16 16" fill="#fff" aria-hidden="true"><path d="M0 2.300L6.700 1.300V7.600H0ZM7.500 1.200L16 0V7.600H7.500ZM0 8.400H6.700V14.700L0 13.700ZM7.500 8.400H16V16L7.500 14.800Z" /></svg>
      </button>
      <label className="flex w-[323px] shrink-0 items-center border-t border-[#dadada] bg-[#f2f2f2] pl-[11px]">
        <svg width="17" height="17" viewBox="0 0 17 17" fill="none" stroke="#222" strokeWidth="1.400" aria-hidden="true"><circle cx="10.500" cy="6.300" r="4.700" /><path d="M7 9.700L1.500 15.500" /></svg>
        <input type="search" aria-label="検索" placeholder="Type here to search" className="ml-[10px] w-full bg-transparent text-[13px] outline-none placeholder:text-[#333]" />
      </label>
      <button type="button" aria-label="タスクビュー" className="flex w-[48px] shrink-0 items-center justify-center pr-[2px]">
        <svg width="18" height="17" viewBox="0 0 18 17" fill="none" stroke="#e4e4e4" strokeWidth="1.200" aria-hidden="true"><path d="M1 1V3.500H11V1M1 16V13.500H11V16M2 5.500H10V11.500H2ZM15 1V4.500M15 11V16" /><rect x="14" y="6.500" width="2" height="2.500" fill="#e4e4e4" /></svg>
      </button>
      <div className="flex shrink-0">
        {apps.map((a) => (
          <button
            key={a.name}
            type="button"
            aria-label={a.name}
            className={`relative flex w-[40px] shrink-0 items-center justify-center pl-[2px] ${a.state === "active" ? "bg-[#4d5857]" : ""}`}
          >
            <svg width="23" height="23" viewBox="0 0 24 24" aria-hidden="true">{a.art}</svg>
            {a.state && <span className={`absolute bottom-0 h-[2px] bg-[#76b2e6] ${a.state === "active" ? "inset-x-0" : "inset-x-[4px]"}`} />}
          </button>
        ))}
      </div>
      <div className="ml-auto flex items-center">
        {tray.map((t) => (
          <button key={t.name} type="button" aria-label={t.name} className="flex w-[30px] justify-center">
            <svg width="20" height="20" viewBox="0 0 20 20" aria-hidden="true">{t.art}</svg>
          </button>
        ))}
        <button type="button" aria-label="入力モード" className="flex w-[25px] justify-center">
          <svg width="14" height="14" viewBox="0 0 14 14" aria-hidden="true"><circle cx="7" cy="7" r="6.700" fill="#b7bcbc" /><path d="M4.300 4.300L9.700 9.700M9.700 4.300L4.300 9.700" stroke="#222d2c" strokeWidth="1.700" /></svg>
        </button>
        <button type="button" aria-label="IME" className="flex w-[29px] justify-center">
          <svg width="14" height="14" viewBox="0 0 14 14" aria-hidden="true"><rect width="14" height="14" fill="#eee" /><circle cx="7" cy="7" r="5.800" fill="#222" /><path d="M8.500 3V8Q8.500 10.500 5.500 10.500" stroke="#fff" strokeWidth="1.700" fill="none" /></svg>
        </button>
        <div className="w-[74px] text-center text-[11px] leading-[17px]">
          <div>14:49</div>
          <div>2020/04/13</div>
        </div>
        <button type="button" aria-label="通知" className="relative ml-[9px] flex h-full w-[34px] items-center">
          <svg width="17" height="16" viewBox="0 0 17 16" aria-hidden="true"><path d="M1 1H16V12H9L5.500 15V12H1Z" fill="#eee" /><path d="M3.500 4H13.500M3.500 6.500H13.500M3.500 9H10" stroke="#333" /></svg>
          <span className="absolute top-[18px] left-[7px] flex size-[17px] items-center justify-center rounded-full border border-[#888] bg-[#333d3c] text-[10px] font-semibold">32</span>
        </button>
        <span className="mr-[4px] h-full w-px self-stretch bg-[#4d5857]" />
      </div>
    </footer>
  );
}

export default function App() {
  return (
    <div className="flex h-screen flex-col overflow-hidden bg-white font-['Inter','Noto_Sans_CJK_JP',sans-serif]">
      <TitleBar />
      <div className="flex min-h-0 flex-1">
        <Sidebar />
        <Palette />
        <Workspace />
      </div>
      <Taskbar />
    </div>
  );
}
